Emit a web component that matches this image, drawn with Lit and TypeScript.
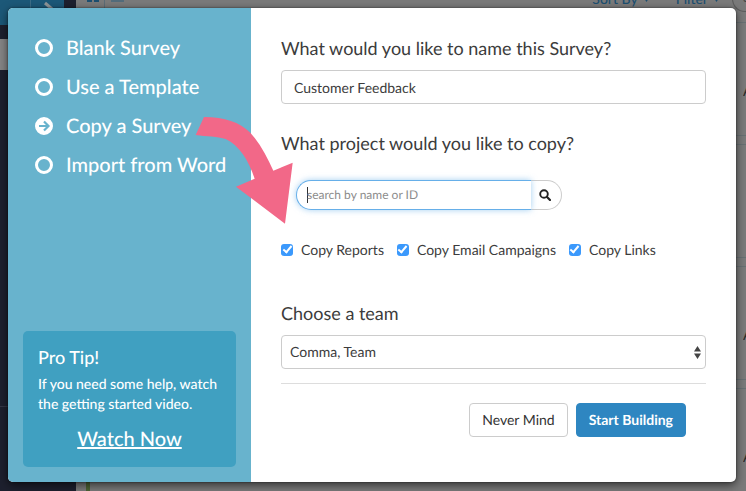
import { LitElement, html, css } from "lit";
import { customElement, state } from "lit/decorators.js";

const METHODS = ["Blank Survey", "Use a Template", "Copy a Survey", "Import from Word"];
const COPY_PARTS = ["Copy Reports", "Copy Email Campaigns", "Copy Links"];

/** The dashboard that lies dimmed behind the dialog. */
@customElement("dashboard-backdrop")
export class DashboardBackdrop extends LitElement {
  static styles = css`
    :host {
      display: grid;
      grid-template-columns: 76px 1fr;
      overflow: hidden;
      background: #7a7a7a;
      color: #1c4f70;
      font: 14px/20px Lato, sans-serif;
    }
    .side {
      background: #1d202e;
    }
    .brand {
      display: grid;
      grid-template-columns: 30px 34px 1fr;
      height: 25px;
    }
    .brand span {
      background: #1c5878;
    }
    .brand .toggle {
      border-left: 1px solid #3c6c86;
    }
    .toggle svg {
      display: block;
      margin-left: 12px;
    }
    .current {
      height: 31px;
      margin-top: 14px;
      background: #858585;
    }
    .rule {
      margin-top: 336px;
      border-top: 1px solid #343645;
    }
    .bar {
      display: flex;
      height: 22px;
      overflow: hidden;
    }
    .views {
      display: flex;
      flex: 1;
      padding-left: 10px;
    }
    .views svg {
      display: block;
    }
    .menu {
      display: flex;
      align-items: center;
      gap: 6px;
      height: 20px;
      margin: -11px 27px 0 0;
      font-weight: 500;
    }
    .menu svg {
      margin-top: 2px;
    }
    .menu + .menu {
      margin-right: 13px;
    }
    .find {
      box-sizing: border-box;
      width: 14px;
      height: 26px;
      margin-top: -14px;
      padding-left: 10px;
      border: 1px solid #5c5c5c;
      border-right: 0;
      border-radius: 13px 0 0 13px;
      color: #444;
      overflow: hidden;
    }
    .card {
      display: flex;
      justify-content: flex-end;
      align-items: center;
      box-sizing: border-box;
      height: 114px;
      margin: 0 0 8px 10px;
      padding-top: 24px;
      border: solid #687073;
      border-width: 1px 0;
      border-left: 4px solid #4d6335;
      color: #2a2a2a;
    }
    .card span {
      width: 3px;
      overflow: hidden;
    }
  `;

  private renderMenu(name: string) {
    return html`<div class="menu">
      ${name}
      <svg width="5" height="4" viewBox="0 0 5 4"><path d="M0 0h5L2.500 4z" fill="#1c4f70" /></svg>
    </div>`;
  }

  render() {
    return html`
      <div class="side">
        <div class="brand">
          <span></span>
          <span class="toggle">
            <svg width="12" height="12" viewBox="0 0 12 12">
              <path d="M2 3l7 6" stroke="#8f9599" stroke-width="3" fill="none" />
            </svg>
          </span>
        </div>
        <div class="current"></div>
        <div class="rule"></div>
      </div>
      <div class="main">
        <div class="bar">
          <div class="views">
            <svg width="40" height="8" viewBox="0 0 40 8">
              <path d="M1 0h5v2H1zM8 0h5v2H8z" fill="#1c4f70" />
              <path d="M18.500 0v8" stroke="#5c6c76" />
              <path d="M25 0h13v2H25z" fill="#536c7b" />
            </svg>
          </div>
          ${this.renderMenu("Sort By")} ${this.renderMenu("Filter")}
          <div class="find">S</div>
        </div>
        ${["A", "", "A", "A"].map((t) => html`<div class="card"><span>${t}</span></div>`)}
      </div>
    `;
  }
}

@customElement("app-root")
export class AppRoot extends LitElement {
  @state() private method = "Copy a Survey";

  static styles = css`
    :host {
      display: grid;
      position: relative;
      box-sizing: border-box;
      min-height: 100vh;
      padding: 8px 10px 9px 8px;
      overflow: hidden;
      font: 14px/20px Lato, sans-serif;
      text-rendering: geometricPrecision;
      color: #3c3c3c;
    }
    dashboard-backdrop {
      position: absolute;
      inset: 0;
    }
    .dialog {
      position: relative;
      display: grid;
      grid-template-columns: 243px 1fr;
      border-radius: 5px;
      background: #fff;
      box-shadow: 0 3px 10px rgba(0, 0, 0, 0.6), 0 0 2px rgba(0, 0, 0, 0.6);
    }
    .panel {
      display: flex;
      flex-direction: column;
      justify-content: space-between;
      padding: 28px 15px 15px;
      border-radius: 5px 0 0 5px;
      background: #68b3cd;
      color: #fff;
      font-weight: 500;
    }
    .methods {
      display: grid;
      gap: 15px;
      margin: 0;
      padding: 0 0 0 12px;
      border: 0;
      font-size: 20px;
      line-height: 24px;
    }
    .method {
      display: flex;
      align-items: center;
      gap: 13px;
      white-space: nowrap;
    }
    .dot {
      display: grid;
      width: 18px;
      height: 18px;
    }
    .dot input,
    .dot svg {
      grid-area: 1 / 1;
    }
    .dot input {
      appearance: none;
      box-sizing: border-box;
      width: 18px;
      height: 18px;
      margin: 0;
      border: 3px solid #fff;
      border-radius: 50%;
    }
    .dot input:checked {
      background: #fff;
    }
    .dot svg {
      pointer-events: none;
    }
    .tip {
      display: flex;
      flex-direction: column;
      padding: 14px 15px 15px;
      border-radius: 5px;
      background: #40a0c1;
    }
    .tip h2 {
      margin: 0 0 5px;
      font-size: 18px;
      line-height: 24px;
      font-weight: 500;
    }
    .tip p {
      margin: 0 0 12px;
    }
    .tip a {
      align-self: center;
      color: #fff;
      font-size: 20px;
      line-height: 26px;
    }
    form {
      padding: 28px 30px 45px;
    }
    .title {
      display: block;
      font-size: 18px;
      line-height: 24px;
      margin-bottom: 10px;
    }
    input,
    select,
    button {
      font: inherit;
      color: inherit;
      text-rendering: inherit;
    }
    .field {
      display: block;
      appearance: none;
      box-sizing: border-box;
      width: 100%;
      height: 34px;
      border: 1px solid #ccc;
      border-radius: 4px;
      background: #fff;
      padding: 0 12px;
      outline: 0;
    }
    .name {
      margin-bottom: 27px;
    }
    .search {
      display: flex;
      width: 266px;
      height: 30px;
      margin: 25px 0 30px 15px;
    }
    .query {
      position: relative;
      flex: 1;
      min-width: 0;
      box-sizing: border-box;
      border: 1px solid #66afe9;
      border-right: 0;
      border-radius: 15px 0 0 15px;
      background: linear-gradient(#333, #333) 10px 6px / 1px 16px no-repeat #fff;
      box-shadow: 0 0 6px rgba(102, 175, 233, 0.6);
      padding: 0 10px;
      font-size: 12px;
      outline: 0;
    }
    .query::placeholder {
      color: #8c8c8c;
    }
    .go {
      display: grid;
      place-items: center;
      box-sizing: border-box;
      width: 31px;
      padding: 0 3px 0 0;
      border: 1px solid #ccc;
      border-left: 0;
      border-radius: 0 15px 15px 0;
      background: #fff;
    }
    .parts {
      display: flex;
      gap: 13px;
      margin-bottom: 41px;
      white-space: nowrap;
    }
    .part {
      display: flex;
      align-items: center;
      gap: 8px;
    }
    .part input {
      appearance: none;
      display: grid;
      justify-content: center;
      width: 12px;
      height: 12px;
      margin: 0;
      border-radius: 3px;
      background: #fff;
      box-shadow: inset 0 0 0 1px #aaa;
    }
    .part input:checked {
      background: #3b99fc;
      box-shadow: none;
    }
    .part input:checked::before {
      content: "";
      box-sizing: border-box;
      width: 5px;
      height: 9px;
      border: solid #fff;
      border-width: 0 2px 2px 0;
      transform: rotate(40deg);
    }
    .choice {
      position: relative;
      padding-bottom: 14px;
      border-bottom: 1px solid #ddd;
    }
    .choice select {
      padding: 0 8px;
    }
    .choice svg {
      position: absolute;
      top: 11px;
      right: 5px;
      pointer-events: none;
    }
    .actions {
      display: flex;
      justify-content: flex-end;
      gap: 8px;
      padding: 19px 20px 0 0;
    }
    .actions button {
      height: 34px;
      padding: 0 12px;
      border: 1px solid #ccc;
      border-radius: 4px;
      background: #fff;
      color: #333;
      white-space: nowrap;
    }
    .actions .primary {
      border-color: #2e86c1;
      background: #2e86c1;
      color: #fff;
      font-weight: 700;
    }
    .pointer {
      position: absolute;
      left: 187px;
      top: 108px;
      pointer-events: none;
    }
  `;

  private renderMethod(name: string) {
    const on = name === this.method;
    return html`
      <label class="method">
        <span class="dot">
          <input type="radio" name="method" .checked=${on} @change=${() => (this.method = name)} />
          ${on
            ? html`<svg width="18" height="18" viewBox="0 0 18 18" fill="none">
                <path d="M4 9h9M9 4.500L13.500 9L9 13.500" stroke="#68b3cd" stroke-width="2.200" />
              </svg>`
            : ""}
        </span>
        ${name}
      </label>
    `;
  }

  render() {
    return html`
      <dashboard-backdrop aria-hidden="true"></dashboard-backdrop>
      <div class="dialog" role="dialog" aria-label="New survey">
        <div class="panel">
          <fieldset class="methods">${METHODS.map((m) => this.renderMethod(m))}</fieldset>
          <section class="tip">
            <h2>Pro Tip!</h2>
            <p>If you need some help, watch the getting started video.</p>
            <a href="#video">Watch Now</a>
          </section>
        </div>
        <form @submit=${(e: Event) => e.preventDefault()}>
          <label class="title" for="name">What would you like to name this Survey?</label>
          <input class="field name" id="name" type="text" value="Customer Feedback" />
          <label class="title" for="query">What project would you like to copy?</label>
          <div class="search">
            <input class="query" id="query" type="text" placeholder="search by name or ID" />
            <button class="go" type="button" aria-label="Search">
              <svg width="12" height="12" viewBox="0 0 12 12" fill="none" stroke="#222">
                <circle cx="5" cy="5" r="3.800" stroke-width="1.900" />
                <path d="M7.800 7.800L11 11" stroke-width="2.200" stroke-linecap="round" />
              </svg>
            </button>
          </div>
          <div class="parts">
            ${COPY_PARTS.map(
              (p) => html`<label class="part"><input type="checkbox" checked />${p}</label>`
            )}
          </div>
          <label class="title" for="team">Choose a team</label>
          <div class="choice">
            <select class="field" id="team">
              <option>Comma, Team</option>
            </select>
            <svg width="7" height="13" viewBox="0 0 7 13" fill="#444">
              <path d="M0 5.500L3.500 0L7 5.500zM0 7.500L3.500 13L7 7.500z" />
            </svg>
          </div>
          <div class="actions">
            <button type="button">Never Mind</button>
            <button class="primary" type="submit">Start Building</button>
          </div>
        </form>
        <svg class="pointer" width="98" height="108" viewBox="45 48 294 324" fill="#f26888">
          <path
            d="M72 51C135 52 178 66 211 98C240 130 262 172 280 212L338 188L315 371L168 260L224 236C205 180 178 136 137 117C112 109 80 110 47 105Z"
          />
        </svg>
      </div>
    `;
  }
}
